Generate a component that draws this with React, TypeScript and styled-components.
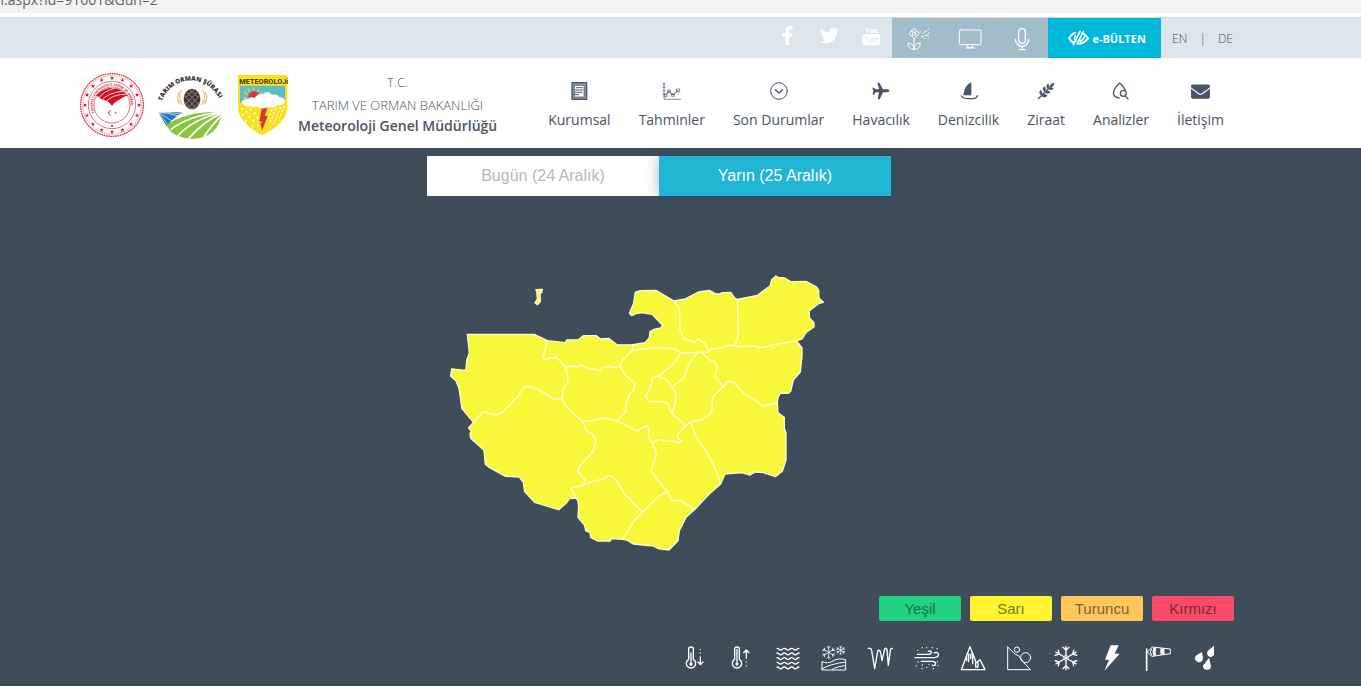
import React from "react";
import styled, { createGlobalStyle } from "styled-components";
import { FaFacebookF, FaTwitter, FaEnvelope } from "react-icons/fa";

const GlobalStyle = createGlobalStyle`
  * { box-sizing: border-box; }
  body {
    margin: 0;
    background: #fff;
    color: #4a5463;
    font-family: "Open Sans", "Noto Sans", sans-serif;
  }
  a { color: inherit; text-decoration: none; }
  svg { display: block; }
`;

const AddressStrip = styled.div`
  display: flex;
  align-items: flex-end;
  height: 13px;
  padding-bottom: 6px;
  overflow: hidden;
  background: #f1f3f4;
  color: #5f6368;
  font-size: 14px;
  line-height: 14px;
`;

const AddressText = styled.span`
  margin-left: -8px;
`;

const TopBar = styled.div`
  display: flex;
  justify-content: flex-end;
  height: 41px;
  margin-top: 4px;
  padding-right: 128px;
  border-top: 1px solid #d3dde2;
  background: #dbe5eb;
`;

const Social = styled.div`
  display: flex;
  align-items: center;
  gap: 22px;
  padding: 0 11px 6px 0;
  color: #fff;
`;

const SocialLink = styled.a`
  display: flex;
  justify-content: center;
  width: 20px;
`;

const Features = styled.div`
  display: flex;
  background: #a3bcca;
  color: #fff;
`;

const FeatureLink = styled.a`
  display: flex;
  align-items: center;
  justify-content: center;
  width: 52px;
  padding-top: 2px;
`;

const Bulletin = styled.a`
  display: flex;
  align-items: center;
  justify-content: center;
  gap: 3px;
  width: 113px;
  padding-left: 4px;
  background: #00b8d8;
  color: #fff;
  font-size: 11px;
  font-weight: 700;
`;

const Languages = styled.div`
  display: flex;
  align-items: center;
  gap: 12px;
  padding-left: 11px;
  font-size: 12px;
  font-weight: 300;
  color: #4a5463;
`;

const Header = styled.header`
  display: flex;
  align-items: center;
  justify-content: space-between;
  min-height: 90px;
  padding: 0 137px 0 80px;
  background: #fff;
`;

const Brand = styled.a`
  display: flex;
  align-items: center;
  gap: 10px;
`;

const Logos = styled.div`
  display: flex;
  align-items: center;
  gap: 12px;
  padding-top: 4px;
`;

const BrandText = styled.div`
  display: flex;
  flex-direction: column;
  align-items: center;
  font-size: 13px;
  font-weight: 300;
  line-height: 23px;
  white-space: nowrap;
`;

const BrandName = styled.strong`
  font-size: 14px;
  font-weight: 600;
  line-height: 18px;
`;

const Nav = styled.nav`
  display: flex;
  gap: 28px;
`;

const NavLink = styled.a`
  display: flex;
  flex-direction: column;
  align-items: center;
  gap: 9px;
  padding-top: 5px;
  font-size: 14px;
  line-height: 20px;
  white-space: nowrap;
`;

const NavIcon = styled.span`
  display: flex;
  align-items: center;
  justify-content: center;
  height: 20px;
  color: #4a5568;
`;

const Main = styled.main`
  display: flex;
  flex-direction: column;
  padding: 8px 123px 12px 80px;
  background: #3f4c59;
`;

const Tabs = styled.div`
  display: flex;
  align-self: center;
  width: 464px;
  max-width: 100%;
`;

const Tab = styled.button<{ $active?: boolean }>`
  flex: 1;
  height: 40px;
  padding: 0;
  border: 0;
  background: ${(p) => (p.$active ? "#20b6d4" : "#fff")};
  box-shadow: ${(p) => (p.$active ? "0 0 14px rgba(0, 80, 100, 0.4)" : "none")};
  color: ${(p) => (p.$active ? "#fff" : "#afbcc1")};
  font: 16px "Liberation Sans", sans-serif;
`;

const MapFrame = styled.div`
  align-self: center;
  width: 464px;
  max-width: 100%;
  padding: 79px 0 45px;
`;

const Legend = styled.div`
  display: flex;
  justify-content: flex-end;
  gap: 9px;
  padding-right: 4px;
`;

const LegendButton = styled.button<{ $bg: string; $ink: string }>`
  width: 82px;
  height: 25px;
  padding: 0;
  border: 0;
  border-radius: 2px;
  background: ${(p) => p.$bg};
  color: ${(p) => p.$ink};
  font: 15px "Liberation Sans", sans-serif;
`;

const Hazards = styled.div`
  display: grid;
  grid-template-columns: repeat(12, 1fr);
  justify-items: center;
  align-self: flex-end;
  width: 556px;
  max-width: 100%;
  margin: 24px 10px 0 0;
  padding-bottom: 3px;
  color: #fff;
`;

const LINE = { fill: "none", stroke: "currentColor", strokeLinecap: "round", strokeLinejoin: "round" } as const;

function Glyph({ box, size, width = 4, children }: { box: string; size: number; width?: number; children: React.ReactNode }) {
  return (
    <svg viewBox={box} width={size} height={size} {...LINE} strokeWidth={width} aria-hidden="true">
      {children}
    </svg>
  );
}

const solid = { fill: "currentColor", stroke: "none" } as const;

function MinistryLogo() {
  const dots = Array.from({ length: 16 }, (_, i) => (i * Math.PI) / 8);
  return (
    <svg viewBox="30 36 192 198" width="64" height="66" role="img" aria-label="Tarım ve Orman Bakanlığı">
      <defs>
        <path id="ringTop" d="M74 158 A57 57 0 1 1 178 158" />
        <clipPath id="fan"><path d="M78 106 Q126 60 174 106 Q158 112 146 120 Q134 126 126 138 Q116 122 98 120 Q88 112 78 106Z" /></clipPath>
      </defs>
      <g fill="none" stroke="#d3323c">
        <circle cx="126" cy="135" r="94" strokeWidth="4" strokeDasharray="5 2" />
        <circle cx="126" cy="135" r="88" strokeWidth="1" />
        <circle cx="126" cy="135" r="71" strokeWidth="2" />
        <circle cx="126" cy="135" r="54" strokeWidth="2" />
      </g>
      {dots.map((a) => (
        <path key={a} fill="#d0202c" transform={`translate(${126 + 81 * Math.sin(a)} ${135 - 81 * Math.cos(a)})`} d="M0-6 1.8-2 6-2 3 1 4 6 0 3-4 6-3 1-6-2-1.8-2Z" />
      ))}
      <text fill="#d0202c" fontSize="10" fontWeight="700">
        <textPath href="#ringTop">TÜRKİYE CUMHURİYETİ TARIM VE ORMAN</textPath>
      </text>
      <g clipPath="url(#fan)">
        <rect x="70" y="70" width="112" height="70" fill="#d0121f" />
        <path d="M94 124Q106 98 172 92M106 130Q120 102 176 102M86 116Q98 94 136 84" fill="none" stroke="#fff" strokeWidth="2.5" />
      </g>
      <path d="M128 153a8 8 0 1 0 0 12 7 7 0 1 1 0-12Z" fill="#d0121f" />
      <circle cx="137" cy="159" r="2.5" fill="#d0121f" />
      <circle cx="126" cy="198" r="3" fill="#d0121f" />
    </svg>
  );
}

function CouncilLogo() {
  const scales: [number, number][] = [
    [370, 86], [361, 94], [379, 94], [352, 103], [370, 103], [388, 103], [361, 113], [379, 113],
    [352, 122], [370, 122], [388, 122], [361, 131], [379, 131], [370, 139],
  ];
  return (
    <svg viewBox="262 24 207 216" width="69" height="72" role="img" aria-label="Tarım Orman Şûrası">
      <defs>
        <path id="arch" d="M280 121 A92 92 0 0 1 454 121" />
        <clipPath id="field"><path d="M269 153Q320 150 360 158Q410 150 461 154Q448 230 372 234Q292 230 269 153Z" /></clipPath>
      </defs>
      <text fill="#3a302d" fontSize="19" fontWeight="800">
        <textPath href="#arch">TARIM ORMAN ŞÛRASI</textPath>
      </text>
      <path d="M339 87Q325 112 343 132M332 91Q320 112 334 130M402 87Q416 112 398 132M409 91Q421 112 406 130" fill="none" stroke="#edc487" strokeWidth="4" />
      <ellipse cx="370" cy="114" rx="25" ry="31" fill="#403532" />
      {scales.map(([x, y]) => (
        <path key={`${x}-${y}`} d={`M${x - 8} ${y - 2}l8 8 8-8`} fill="none" stroke="#c9b9a8" strokeWidth="2" />
      ))}
      <g clipPath="url(#field)">
        <path d="M264 148H362Q320 160 294 196Z" fill="#2877bd" />
        <path d="M265 153Q300 155 335 166M276 153Q315 154 340 160M270 153 312 182M268 152 296 190" fill="none" stroke="#fff" strokeWidth="2" />
        <path d="M294 192Q350 152 464 150V240H320Z" fill="#8bc53f" />
        <path d="M306 206Q360 164 456 153M328 224Q370 176 462 153M354 240Q398 184 464 154M398 240Q424 196 464 158" fill="none" stroke="#fff" strokeWidth="5" />
      </g>
    </svg>
  );
}

function MeteorologyLogo() {
  return (
    <svg viewBox="507 42 153 189" width="51" height="63" role="img" aria-label="Meteoroloji">
      <path d="M510 45H658V150Q650 192 583 226Q518 192 510 150Z" fill="#f9e11e" />
      <path d="M516 77H651V128H516Z" fill="#60bccb" />
      <text x="514" y="71" fontFamily="Roboto" fontWeight="700" fontSize="22" fill="#3b3715">METEOROLOJi</text>
      <path d="M536 116 526 112M538 104 529 96M545 96 541 86M557 92V82M568 96 573 87M576 103 584 97" stroke="#f5da30" strokeWidth="4" />
      <circle cx="558" cy="110" r="17" fill="#dc3145" />
      <path d="M520 126Q526 116 540 117Q548 109 560 114Q570 98 584 103Q598 88 612 104Q626 99 634 111Q648 112 652 124Q648 136 630 136Q614 147 598 140Q580 148 566 140Q528 144 520 126Z" fill="#fff" />
      <path d="M522 146v2M536 154v2M524 164v2M548 148v2M560 158v2M544 170v2M534 182v2M556 182v2M568 172v2M570 196v2M554 198v2" stroke="#fff" strokeWidth="5" strokeLinecap="round" />
      <path d="m650 136-16 40M638 140l-22 54M624 144l-18 44M612 148l-12 28" stroke="#fff" strokeWidth="3" strokeDasharray="9 4" />
      <path d="M581 146 598 144 590 168 599 168 582 212 577 188 586 186 574 184Z" fill="#d8333e" />
    </svg>
  );
}

const YouTubeMark = () => (
  <svg viewBox="278 42 56 64" width="19" height="22" aria-hidden="true">
    <text x="286" y="68" fill="#fff" fontFamily="Roboto" fontSize="22" fontWeight="900">You</text>
    <rect x="279" y="71" width="52" height="34" rx="7" fill="#fff" />
    <text x="284" y="96" fill="#dbe5eb" fontFamily="Roboto" fontSize="20" fontWeight="400">Tube</text>
  </svg>
);

const LowVisionMark = () => (
  <svg viewBox="892 48 66 66" width="22" height="22" aria-hidden="true" {...LINE} strokeWidth="6">
    <path d="M916 65Q905 70 898 82Q904 92 913 96M938 66Q949 71 955 82Q944 97 928 98" />
    <path d="M917 74Q912 84 919 90" strokeWidth="5" />
    <path d="M931 61 911 101M941 62 922 99M944 78Q941 86 932 91" strokeWidth="5" />
  </svg>
);

const features = [
  {
    label: "Polen",
    icon: (
      <Glyph box="405 48 78 78" size={26} width={3}>
        <circle cx="432" cy="71" r="5" />
        <path d="M426 64c-3-11 13-11 12 0 11-3 11 13 1 12 3 11-13 11-13 1-11 2-11-13 0-13ZM432 85v34M432 118c-10 1-18-7-18-18 9-1 18 6 18 18 0-12 8-19 19-18 0 11-8 18-19 18" />
        <path d="M450 66h2M459 71l5-6M468 65l2-4M475 57h1M454 80h6M466 76h8M475 69h2M463 86h2M474 84h1" />
      </Glyph>
    ),
  },
  {
    label: "Ekran",
    icon: (
      <Glyph box="561 48 78 78" size={26} width={3}>
        <rect x="568" y="60" width="65" height="44" rx="3" />
        <path d="M593 105v8h14v-8M587 114h27" />
      </Glyph>
    ),
  },
  {
    label: "Ses",
    icon: (
      <Glyph box="717 48 78 78" size={26} width={4}>
        <rect x="746" y="56" width="20" height="44" rx="10" />
        <path d="M736 88c0 28 40 28 40 0M756 110v8M747 119h18" />
      </Glyph>
    ),
  },
];

const navItems = [
  {
    label: "Kurumsal",
    icon: (
      <Glyph box="89 33 60 60" size={20}>
        <path d="M98 38h44v50H98Z" fill="#8993a2" />
        <path d="M106 46h28v35h-28Z" fill="#fff" strokeWidth="2" />
        <path d="M111 53h18M108 60h22M108 67h20M108 74h10" strokeWidth="3" />
      </Glyph>
    ),
  },
  {
    label: "Tahminler",
    icon: (
      <Glyph box="368 33 60 60" size={20} width={2}>
        <path d="M374 38v50h50M371 42h6M371 52h6M371 62h6M371 72h6" />
        <path d="M380 74l9-10 12 11 15-13" strokeWidth="3" />
        <path d="M376 73h7v7h-7ZM386 60h7v7h-7ZM398 72h7v7h-7ZM413 57h8v8h-8Z" />
      </Glyph>
    ),
  },
  {
    label: "Son Durumlar",
    icon: (
      <Glyph box="687 33 60 60" size={20} width={3}>
        <circle cx="717" cy="63" r="25" />
        <path d="m706 59 11 10 11-10" strokeWidth="4" />
      </Glyph>
    ),
  },
  {
    label: "Havacılık",
    icon: (
      <Glyph box="65 33 60 60" size={20}>
        <path d="M121 62q-2 5-10 5H101L91 88h-6l4-21H79l-5 7h-4l2-12-3-9h5l5 5H89L84 38h6l11 20h10q8 0 10 4Z" {...solid} />
      </Glyph>
    ),
  },
  {
    label: "Denizcilik",
    icon: (
      <Glyph box="327 33 60 60" size={20}>
        <path d="M364 37v39h-24c2-18 9-33 24-39Z" {...solid} />
        <path d="M334 78q5 8 20 8h13q12 0 15-9" />
      </Glyph>
    ),
  },
  {
    label: "Ziraat",
    icon: (
      <Glyph box="561 33 60 60" size={20}>
        <path d="M568 86 606 48" />
        <path d="M576 76c-7-6-5-13-1-16 6 6 7 12 1 16ZM586 66c-6-7-5-13 0-17 6 6 6 12 0 17ZM596 56c-6-6-4-12 1-15 5 4 5 10-1 15ZM578 77c5-7 13-6 17 0-6 6-13 6-17 0ZM588 67c5-7 13-6 17 0-6 5-12 6-17 0ZM598 57c4-7 11-6 16-1-5 5-11 6-16 1ZM603 52c0-9 5-13 13-14 0 9-5 14-13 14Z" {...solid} />
      </Glyph>
    ),
  },
  {
    label: "Analizler",
    icon: (
      <Glyph box="785 33 60 60" size={20}>
        <path d="M809 84c-28-6-16-28 2-45 9 8 15 16 17 23" />
        <circle cx="822" cy="70" r="9" />
        <path d="m829 79 7 8" />
      </Glyph>
    ),
  },
  { label: "İletişim", icon: <FaEnvelope size={19} /> },
];

const waves = [191, 205, 219, 233, 247];
const arms = [0, 60, 120, 180, 240, 300];

function Flake({ x, y, scale, weight }: { x: number; y: number; scale: number; weight: number }) {
  return (
    <g transform={`translate(${x} ${y}) scale(${scale})`} strokeWidth={weight}>
      {arms.map((a) => (
        <path key={a} transform={`rotate(${a})`} d="M0 0V-35M-9-32 0-23 9-32" />
      ))}
    </g>
  );
}

const hazards = [
  {
    label: "Soğuk",
    icon: (
      <Glyph box="36 181 78 78" size={26}>
        <path d="M56 224v-31q0-6 7-6t7 6v31a14 14 0 1 1-14 0Z" />
        <circle cx="63" cy="238" r="5" {...solid} />
        <path d="M63 205v26M91 194v.1M91 205v.1M91 217v22M84 232l7 8 8-8" />
      </Glyph>
    ),
  },
  {
    label: "Sıcak",
    icon: (
      <Glyph box="174 181 78 78" size={26}>
        <path d="M194 224v-31q0-6 7-6t7 6v31a14 14 0 1 1-14 0Z" />
        <circle cx="201" cy="238" r="5" {...solid} />
        <path d="M201 194v38M229 244v.1M229 232v.1M229 197v24M221 204l8-8 8 8" />
      </Glyph>
    ),
  },
  {
    label: "Su baskını",
    icon: (
      <Glyph box="314 181 78 78" size={26}>
        {waves.map((y) => (
          <path key={y} d={`M320 ${y}q4 0 6 3 5 5 10 0 6-6 12 0 5 5 10 0 6-6 12 0 5 5 10 0 2-3 6-3`} />
        ))}
      </Glyph>
    ),
  },
  {
    label: "Kar",
    icon: (
      <Glyph box="452 181 78 78" size={26} width={3}>
        <Flake x={475} y={203} scale={0.55} weight={4} />
        <Flake x={511} y={197} scale={0.36} weight={6} />
        <path d="M456 231q16 8 32-2t38-4v31h-70ZM456 252q22-14 70-20M486 254q14-9 40-11" />
      </Glyph>
    ),
  },
  {
    label: "Buzlanma",
    icon: (
      <Glyph box="590 181 78 78" size={26}>
        <path d="M594 191q9-2 10 7l9 54 9-51q1-8 8-1l5 28 8-35q3-6 7 2l4 47 6-44q1-8 7-7" />
      </Glyph>
    ),
  },
  {
    label: "Toz",
    icon: (
      <Glyph box="730 181 78 78" size={26}>
        <path d="M740 209h32q11-1 10-7-3-5-9-2M733 219h59q13-1 11-11-4-8-13-3M752 230h34q9 1 9 8-3 8-10 3" />
        <path d="M741 197v.1M755 189v.1M768 189v.1M785 189v.1M799 192v.1M742 232v.1M737 244v.1M755 241v.1M768 248v.1M754 252v.1M788 252v.1M802 243v.1M775 239v.1M800 231v.1" />
      </Glyph>
    ),
  },
  {
    label: "Çığ",
    icon: (
      <Glyph box="28 181 78 78" size={26}>
        <path d="M32 255 58 186l19 48 11-9 15 30ZM48 228v-17q1-5 6-2v22M60 222v-13q4-4 6 2v26M75 247v-13h7v13Z" />
      </Glyph>
    ),
  },
  {
    label: "Heyelan",
    icon: (
      <Glyph box="168 181 78 78" size={26} width={3}>
        <path d="M173 187v68h68L213 224q-4-13-18-16l-22-21" />
        <circle cx="201" cy="195" r="8" />
        <circle cx="227" cy="219" r="15" />
      </Glyph>
    ),
  },
  {
    label: "Don",
    icon: (
      <Glyph box="307 181 78 78" size={26}>
        <Flake x={346} y={220} scale={1} weight={4} />
        <path d="M346 212l7 4v8l-7 4-7-4v-8Z" strokeWidth="2" />
      </Glyph>
    ),
  },
  {
    label: "Gök gürültüsü",
    icon: (
      <Glyph box="445 181 78 78" size={26}>
        <path d="M480 182h24l-12 25h15l-46 52 14-34h-12Z" {...solid} />
      </Glyph>
    ),
  },
  {
    label: "Rüzgar",
    icon: (
      <Glyph box="586 181 78 78" size={26} width={3}>
        <path d="M591 193v64" strokeWidth="5" />
        <path d="m594 201 14-14 54 6v14l-54 8ZM605 193q-6 9 0 18" />
        <path d="M611 188q-4 13 0 26l9-2q-4-12 0-23ZM633 190q-3 10 0 20l12-2q-3-9 0-16Z" {...solid} />
      </Glyph>
    ),
  },
  {
    label: "Yağmur",
    icon: (
      <Glyph box="724 181 78 78" size={26}>
        <path d="M790 183v27a11 11 0 1 1-18-12ZM754 202l3 19a12 12 0 1 1-19-10ZM775 219l6 25a12 12 0 1 1-24-1Z" {...solid} />
      </Glyph>
    ),
  },
];

const legend = [
  { label: "Yeşil", bg: "#20d17f", ink: "#177247" },
  { label: "Sarı", bg: "#fff42f", ink: "#7d781d" },
  { label: "Turuncu", bg: "#ffc65c", ink: "#7c6236" },
  { label: "Kırmızı", bg: "#fc4a68", ink: "#7c2738" },
];

const districtBorders = [
  "M322 212 309 265 318 269 330 262 340 265 348 260 360 272 372 287 380 305 384 335 368 362 367 388",
  "M372 287 382 292 388 287 394 292 401 287 408 292 425 285 440 294 455 298 462 296 480 303 490 292 505 289 525 292 541 288",
  "M578 224V240L545 274 541 290 555 315 585 340 580 362 570 370 558 400V425L540 442 528 455",
  "M100 457 115 440 130 425 145 429 165 436 185 428 235 378 252 350 275 351 300 361 345 389 367 386 375 405 405 435 428 455 442 485 456 492 468 508 462 540 420 588 413 602 435 630 430 645 392 655 413 690",
  "M428 455 460 451 492 444 528 452 560 467 593 483 620 466 627 480 625 500 637 520",
  "M430 645 465 632 485 629 510 616 530 632 555 675 568 684 575 695 608 726 580 755 548 808",
  "M578 224V240L650 233 702 236 723 249 805 246 815 237 845 234 865 225 905 230 940 228 965 233 1010 222 1070 213",
  "M702 93 718 115 720 180 730 205 762 217 775 207 795 220 807 245",
  "M892 88 895 195 885 228",
  "M723 249 700 283 655 318 638 323 633 348 617 377 627 395 670 395 683 400 695 430 738 467",
  "M655 318 680 330 698 355 708 368 705 405 695 430",
  "M698 350 730 325 750 275 772 249",
  "M786 249 810 270 823 275 832 290 826 320 850 350 818 380 815 428 785 450 752 455 738 467 715 490 712 505 725 512 718 519 695 512 670 512 655 508 637 520 649 550 634 603 665 645 680 660 695 690 725 694 765 718",
  "M850 350 860 336 880 335 890 347 918 377 940 387 970 408 1012 399",
  "M752 455 768 500 802 550 828 600 842 642",
  "M680 665 655 680 608 726",
];

const outline =
  "M82 193H283L322 212 376 218 380 210 415 209 430 197H468L482 207 506 205 532 225 578 224 615 218 628 203 630 185 642 178 662 174 668 166 636 133 605 128 588 131 575 137 568 130 580 102 586 67 600 62 648 61 702 93 735 87 775 66 808 61 828 72 840 72 846 68 872 67 885 85 892 88 952 76 990 48 995 29 1008 18 1015 23 1032 23 1052 35 1098 34 1130 51 1136 62 1137 85 1150 97 1138 100 1108 122V143L1122 158V171L1100 186 1086 207 1070 213 1086 234V256L1081 306 1060 330 1052 364 1045 370 1022 369 1015 380 1012 395 1014 428 1033 442V475L1038 490V570L1027 604 1006 620 970 608 945 606 930 615 905 608 855 612 842 642 812 668 765 718 738 742 718 782 714 812 687 840 655 836 640 828 580 822 560 810 548 808 515 806 510 813H472L452 802 450 788 437 782 434 766 414 742 416 708 413 690 406 684 388 686 380 698 356 719 284 697 254 665 250 637 238 621 197 619 150 594 136 583 132 541 92 505 90 490 94 485 86 473 100 457 66 416 57 355 48 333 32 318 35 297 74 301 78 297 80 272 88 248Z";

function ProvinceMap() {
  return (
    <svg viewBox="-39 15 1392 828" width="100%" role="img" aria-label="İlçe uyarı haritası" stroke="#fffdd8" strokeWidth="4" strokeLinejoin="round">
      <path d={outline} fill="#f7f83a" />
      <path d="M288 59 307 58 305 68 300 70 301 95 293 104 285 98 292 88 291 70Z" fill="#f7f83a" />
      {districtBorders.map((d) => (
        <path key={d} d={d} fill="none" />
      ))}
    </svg>
  );
}

export default function App() {
  return (
    <>
      <GlobalStyle />
      <AddressStrip>
        <AddressText>nl.aspx?id=91601&amp;Gun=2</AddressText>
      </AddressStrip>
      <TopBar>
        <Social>
          <SocialLink href="#facebook" aria-label="Facebook"><FaFacebookF size={19} /></SocialLink>
          <SocialLink href="#twitter" aria-label="Twitter"><FaTwitter size={19} /></SocialLink>
          <SocialLink href="#youtube" aria-label="YouTube"><YouTubeMark /></SocialLink>
        </Social>
        <Features>
          {features.map((f) => (
            <FeatureLink key={f.label} href="#" aria-label={f.label}>{f.icon}</FeatureLink>
          ))}
        </Features>
        <Bulletin href="#bulten"><LowVisionMark />e-BÜLTEN</Bulletin>
        <Languages>
          <a href="#en">EN</a>
          <span>|</span>
          <a href="#de">DE</a>
        </Languages>
      </TopBar>
      <Header>
        <Brand href="#">
          <Logos>
            <MinistryLogo />
            <CouncilLogo />
            <MeteorologyLogo />
          </Logos>
          <BrandText>
            <span>T.C.</span>
            <span>TARIM VE ORMAN BAKANLIĞI</span>
            <BrandName>Meteoroloji Genel Müdürlüğü</BrandName>
          </BrandText>
        </Brand>
        <Nav>
          {navItems.map((item) => (
            <NavLink key={item.label} href="#">
              <NavIcon>{item.icon}</NavIcon>
              {item.label}
            </NavLink>
          ))}
        </Nav>
      </Header>
      <Main>
        <Tabs>
          <Tab type="button">Bugün (24 Aralık)</Tab>
          <Tab type="button" $active>Yarın (25 Aralık)</Tab>
        </Tabs>
        <MapFrame>
          <ProvinceMap />
        </MapFrame>
        <Legend>
          {legend.map((l) => (
            <LegendButton key={l.label} type="button" $bg={l.bg} $ink={l.ink}>{l.label}</LegendButton>
          ))}
        </Legend>
        <Hazards>
          {hazards.map((h) => (
            <span key={h.label} title={h.label}>{h.icon}</span>
          ))}
        </Hazards>
      </Main>
    </>
  );
}
